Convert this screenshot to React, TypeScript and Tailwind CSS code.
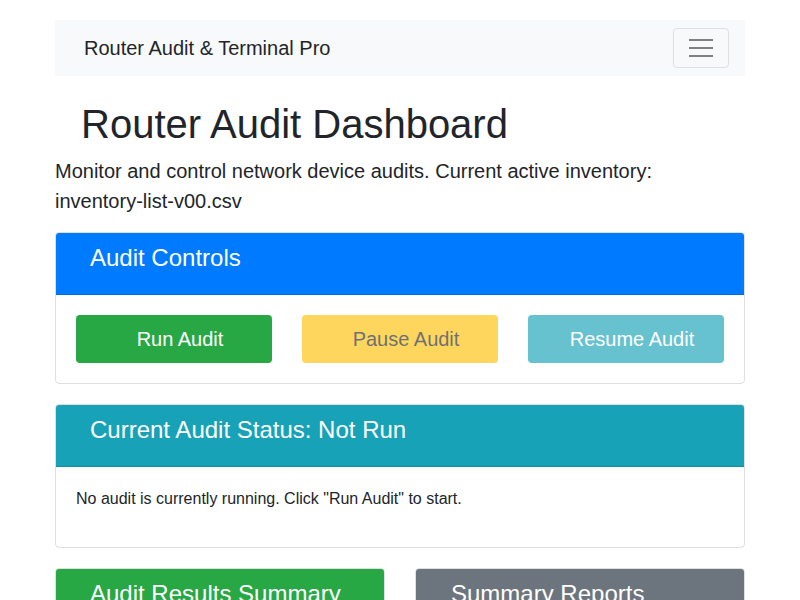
import React from "react";

export default function App() {
  return (
    <div
      className="w-[800px] h-[600px] overflow-hidden bg-white text-[#212529]"
      style={{ fontFamily: '"Liberation Sans", Arial, sans-serif' }}
    >
      <div className="mx-[55px] pt-5">
        {/* Navbar */}
        <nav className="h-[56px] bg-[#f8f9fa] flex items-center justify-between pl-[29px] pr-4">
          <span className="text-[20px] leading-[30px]">Router Audit &amp; Terminal Pro</span>
          <button className="w-[56px] h-[40px] border border-[rgba(0,0,0,0.1)] rounded flex flex-col items-center justify-center gap-[6px]">
            <span className="block w-[24px] h-[2px] bg-[#7f8080]" />
            <span className="block w-[24px] h-[2px] bg-[#7f8080]" />
            <span className="block w-[24px] h-[2px] bg-[#7f8080]" />
          </button>
        </nav>

        <h1 className="mt-6 mb-2 pl-[26px] text-[40px] leading-[48px] font-normal">Router Audit Dashboard</h1>
        <p className="text-[20px] leading-[30px] mb-4">
          Monitor and control network device audits. Current active inventory: inventory-list-v00.csv
        </p>

        {/* Audit Controls */}
        <div className="border border-[rgba(0,0,0,0.125)] rounded mb-5 overflow-hidden">
          <div className="bg-[#007bff] text-white px-[34px] pt-[11px] pb-[21px] border-b border-[rgba(0,0,0,0.125)]">
            <h4 className="text-[24px] leading-[28.8px] font-normal">Audit Controls</h4>
          </div>
          <div className="p-5 grid grid-cols-3 gap-[30px]">
            <button className="h-[48px] rounded bg-[#28a745] text-white text-[20px] leading-[30px] pl-3">Run Audit</button>
            <button className="h-[48px] rounded bg-[#ffc107] text-[#212529] text-[20px] leading-[30px] opacity-65 pl-3">Pause Audit</button>
            <button className="h-[48px] rounded bg-[#17a2b8] text-white text-[20px] leading-[30px] opacity-65 pl-3">Resume Audit</button>
          </div>
        </div>

        {/* Status */}
        <div className="border border-[rgba(0,0,0,0.125)] rounded mb-5 overflow-hidden">
          <div className="bg-[#17a2b8] text-white px-[34px] pt-[11px] pb-[21px] border-b border-[rgba(0,0,0,0.125)]">
            <h4 className="text-[24px] leading-[28.8px] font-normal">Current Audit Status: Not Run</h4>
          </div>
          <div className="p-5">
            <p className="text-[16px] leading-[24px] mb-4">No audit is currently running. Click "Run Audit" to start.</p>
          </div>
        </div>

        {/* Bottom cards */}
        <div className="grid grid-cols-2 gap-[30px]">
          <div className="border border-[rgba(0,0,0,0.125)] rounded overflow-hidden">
            <div className="bg-[#28a745] text-white px-[34px] pt-[11px] pb-[21px]">
              <h4 className="text-[24px] leading-[28.8px] font-normal">Audit Results Summary</h4>
            </div>
            <div className="p-5 h-[100px]" />
          </div>
          <div className="border border-[rgba(0,0,0,0.125)] rounded overflow-hidden">
            <div className="bg-[#6c757d] text-white px-[35px] pt-[11px] pb-[21px]">
              <h4 className="text-[24px] leading-[28.8px] font-normal">Summary Reports</h4>
            </div>
            <div className="p-5 h-[100px]" />
          </div>
        </div>
      </div>
    </div>
  );
}
